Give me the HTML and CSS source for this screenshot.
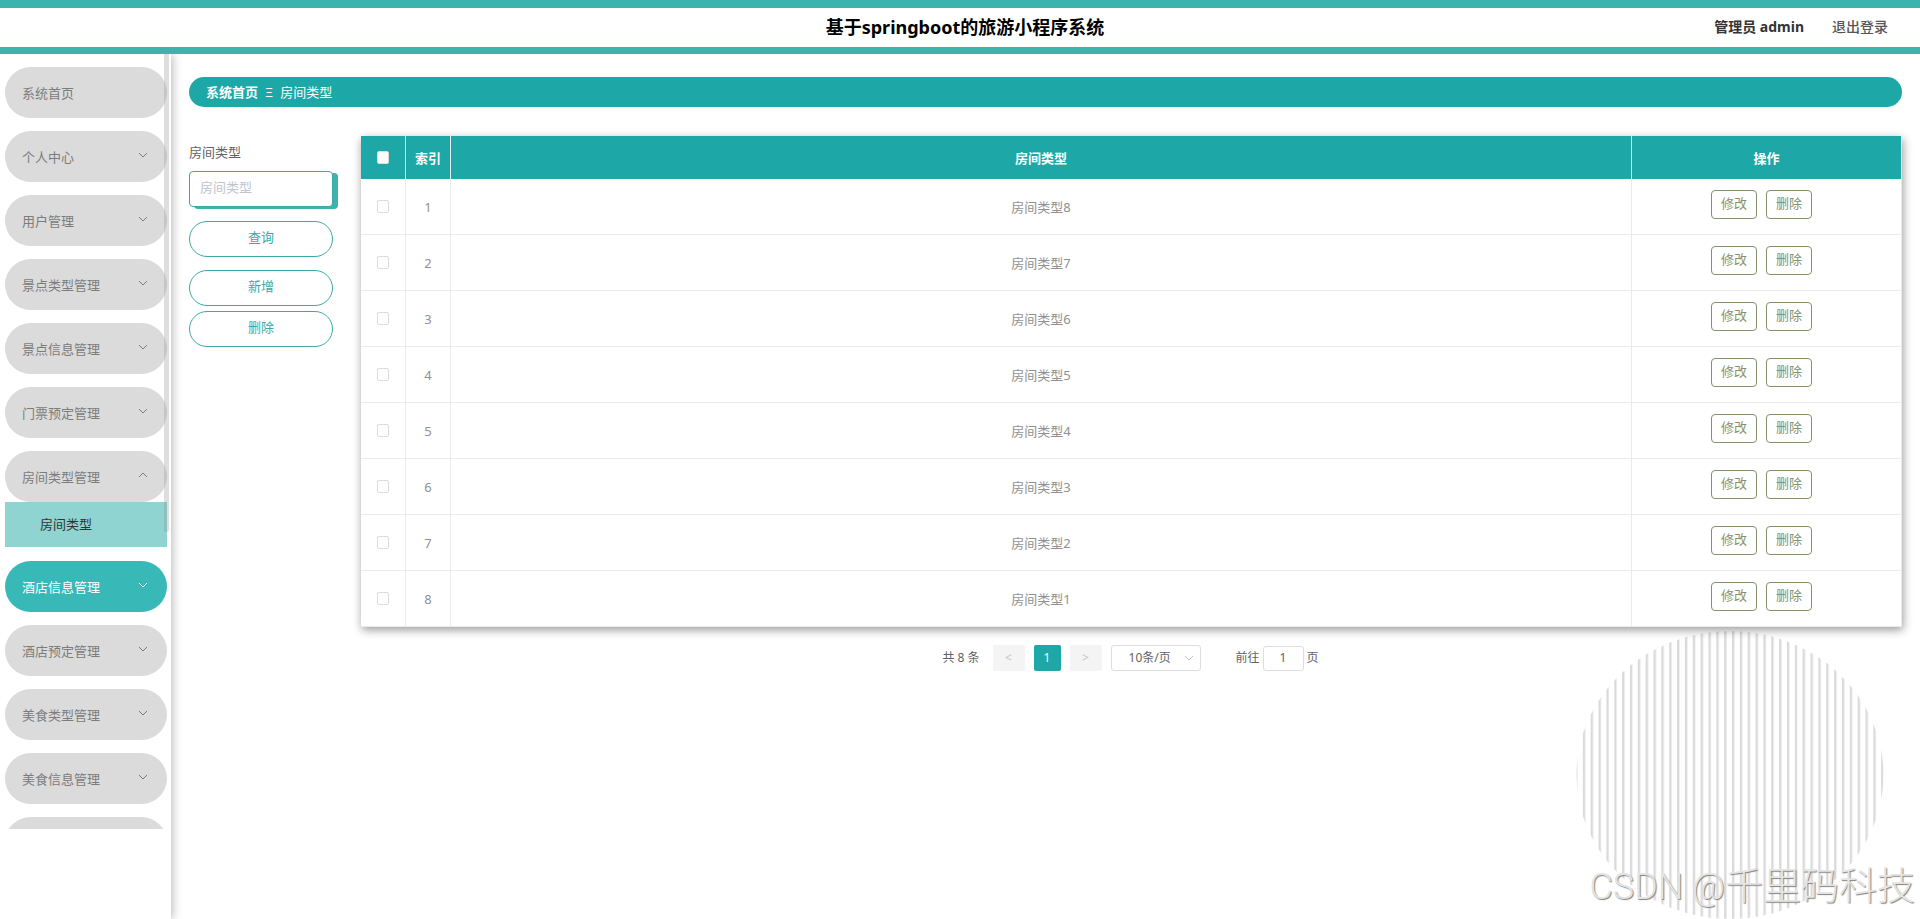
FILE: index.html
```html
<!DOCTYPE html>
<html lang="zh-CN">
<head>
<meta charset="utf-8">
<title>基于springboot的旅游小程序系统</title>
<link rel="stylesheet" href="styles.css">
</head>
<body>
<svg class="defs" aria-hidden="true">
  <symbol id="chevron" viewBox="0 0 10 6"><path d="M1 1l4 4 4-4" fill="none" stroke="currentColor"/></symbol>
</svg>
<header class="topbar">
  <span></span>
  <h1 class="topbar-title">基于springboot的旅游小程序系统</h1>
  <div class="topbar-user"><span class="user-name">管理员 admin</span><a class="logout" href="#">退出登录</a></div>
</header>
<div class="layout">
  <aside class="sidebar">
    <nav class="menu">
      <a class="menu-item" href="#">系统首页</a>
      <button class="menu-item">个人中心<svg class="arrow"><use href="#chevron"/></svg></button>
      <button class="menu-item">用户管理<svg class="arrow"><use href="#chevron"/></svg></button>
      <button class="menu-item">景点类型管理<svg class="arrow"><use href="#chevron"/></svg></button>
      <button class="menu-item">景点信息管理<svg class="arrow"><use href="#chevron"/></svg></button>
      <button class="menu-item">门票预定管理<svg class="arrow"><use href="#chevron"/></svg></button>
      <div class="submenu">
        <button class="menu-item" aria-expanded="true">房间类型管理<svg class="arrow arrow-up"><use href="#chevron"/></svg></button>
        <a class="submenu-item" href="#">房间类型</a>
      </div>
      <button class="menu-item menu-item-hover">酒店信息管理<svg class="arrow"><use href="#chevron"/></svg></button>
      <button class="menu-item">酒店预定管理<svg class="arrow"><use href="#chevron"/></svg></button>
      <button class="menu-item">美食类型管理<svg class="arrow"><use href="#chevron"/></svg></button>
      <button class="menu-item">美食信息管理<svg class="arrow"><use href="#chevron"/></svg></button>
      <button class="menu-item" aria-label="更多"></button>
    </nav>
    <div class="scroll-thumb"></div>
  </aside>
  <main class="main">
    <nav class="breadcrumb"><a class="crumb-home" href="#">系统首页</a><span>Ξ</span><span>房间类型</span></nav>
    <div class="content">
      <form class="search">
        <label class="search-label" for="room-type">房间类型</label>
        <input class="search-input" id="room-type" type="text" placeholder="房间类型">
        <button class="pill" type="button">查询</button>
        <div class="pill-group">
          <button class="pill" type="button">新增</button>
          <button class="pill" type="button">删除</button>
        </div>
      </form>
      <section class="listing">
        <table class="grid">
          <colgroup><col class="col-small"><col class="col-small"><col><col class="col-actions"></colgroup>
          <thead><tr><th><input class="check" type="checkbox" aria-label="全选"></th><th>索引</th><th>房间类型</th><th>操作</th></tr></thead>
          <tbody>
            <tr><td><input class="check" type="checkbox" aria-label="选择 1"></td><td>1</td><td>房间类型8</td><td><div class="actions"><button class="action">修改</button><button class="action">删除</button></div></td></tr>
            <tr><td><input class="check" type="checkbox" aria-label="选择 2"></td><td>2</td><td>房间类型7</td><td><div class="actions"><button class="action">修改</button><button class="action">删除</button></div></td></tr>
            <tr><td><input class="check" type="checkbox" aria-label="选择 3"></td><td>3</td><td>房间类型6</td><td><div class="actions"><button class="action">修改</button><button class="action">删除</button></div></td></tr>
            <tr><td><input class="check" type="checkbox" aria-label="选择 4"></td><td>4</td><td>房间类型5</td><td><div class="actions"><button class="action">修改</button><button class="action">删除</button></div></td></tr>
            <tr><td><input class="check" type="checkbox" aria-label="选择 5"></td><td>5</td><td>房间类型4</td><td><div class="actions"><button class="action">修改</button><button class="action">删除</button></div></td></tr>
            <tr><td><input class="check" type="checkbox" aria-label="选择 6"></td><td>6</td><td>房间类型3</td><td><div class="actions"><button class="action">修改</button><button class="action">删除</button></div></td></tr>
            <tr><td><input class="check" type="checkbox" aria-label="选择 7"></td><td>7</td><td>房间类型2</td><td><div class="actions"><button class="action">修改</button><button class="action">删除</button></div></td></tr>
            <tr><td><input class="check" type="checkbox" aria-label="选择 8"></td><td>8</td><td>房间类型1</td><td><div class="actions"><button class="action">修改</button><button class="action">删除</button></div></td></tr>
          </tbody>
        </table>
        <div class="pager">
          <span class="pager-total">共 8 条</span>
          <button class="pager-step" disabled>&lt;</button>
          <button class="pager-page">1</button>
          <button class="pager-step" disabled>&gt;</button>
          <div class="pager-size"><select class="pager-select" aria-label="每页条数"><option>10条/页</option></select><svg class="pager-arrow"><use href="#chevron"/></svg></div>
          <label class="pager-jump">前往<input class="pager-input" type="text" value="1">页</label>
        </div>
      </section>
    </div>
  </main>
</div>
<svg class="stripes" viewBox="0 0 308 288" aria-hidden="true">
  <defs><pattern id="bars" x="-1" width="7.85" height="288" patternUnits="userSpaceOnUse"><rect width="2.4" height="288" fill="#dadada"/></pattern></defs>
  <ellipse cx="154" cy="144" rx="153.5" ry="144" fill="url(#bars)"/>
</svg>
<div class="watermark"><span class="watermark-latin">CSDN @</span>千里码科技</div>
</body>
</html>
```
FILE: styles.css
```css
* { box-sizing: border-box; }
body {
  margin: 0;
  min-height: 100vh;
  display: flex;
  flex-direction: column;
  background: #fff;
  color: #606266;
  font: 13px/20px "Noto Sans", "Noto Sans CJK SC", sans-serif;
}
button, input, select { font: inherit; color: inherit; margin: 0; }
button { cursor: pointer; }
a { color: inherit; text-decoration: none; }
.defs { display: none; }

.topbar {
  height: 54px;
  display: grid;
  grid-template-columns: 1fr auto 1fr;
  align-items: center;
  padding: 0 32px 2px 42px;
  background: #fff;
  border-top: 8px solid #3cb4ad;
  border-bottom: 7px solid #3cb4ad;
}
.topbar-title { margin: 0; font-size: 18px; line-height: 24px; font-weight: 700; color: #000; }
.topbar-user { display: flex; justify-content: flex-end; gap: 28px; font-size: 14px; }
.user-name { font-weight: 700; color: #333; }
.logout { color: #555; font-weight: 500; }

.layout { flex: 1; display: flex; }
.sidebar {
  position: relative;
  flex: none;
  width: 171px;
  background: #fff;
  box-shadow: 1px 0 10px rgba(0, 0, 0, 0.3);
  clip-path: inset(0 -20px 0 0);
}
.menu {
  height: calc(100vh - 144px);
  overflow: hidden;
  display: flex;
  flex-direction: column;
  gap: 13px;
  padding: 13px 4px 0 5px;
}
.menu-item {
  flex: none;
  width: 100%;
  height: 51px;
  display: flex;
  align-items: center;
  justify-content: space-between;
  padding: 0 19px 0 17px;
  border: 0;
  border-radius: 26px;
  background: #dbdbdb;
  color: #7c7c7c;
  text-align: left;
}
.menu-item-hover { background: #38b8b6; color: #fff; }
.arrow { width: 10px; height: 6px; margin-bottom: 3px; }
.arrow-up { transform: rotate(180deg); }
.submenu { flex: none; padding-bottom: 1px; }
.submenu-item {
  display: flex;
  align-items: center;
  height: 45px;
  padding: 0 0 2px 35px;
  background: #8fd4d0;
  color: #333;
}
.scroll-thumb {
  position: absolute;
  top: 0;
  left: 164px;
  width: 5px;
  height: 478px;
  border-radius: 0 0 3px 3px;
  background: rgba(144, 147, 153, 0.3);
}

.main { flex: 1; min-width: 0; padding: 23px 18px 0; }
.breadcrumb {
  height: 30px;
  display: flex;
  align-items: center;
  gap: 7px;
  padding: 0 17px 1px;
  border-radius: 15px;
  background: #1da7a7;
  color: #fff;
}
.crumb-home { font-weight: 700; }
.content { display: flex; align-items: flex-start; gap: 28px; padding-top: 29px; }

.search { flex: none; width: 144px; display: flex; flex-direction: column; padding-top: 6px; }
.search-label { margin-bottom: 9px; }
.search-input {
  width: 100%;
  height: 36px;
  margin-bottom: 14px;
  padding: 0 10px 4px;
  border: 1px solid #3ca8a8;
  border-radius: 4px;
  background: #fff;
  box-shadow: 5px 2px 0 #3cb4ad;
  outline: 0;
}
.search-input::placeholder { color: #c0c4cc; opacity: 1; }
.pill {
  width: 100%;
  height: 36px;
  padding: 0 0 5px;
  border: 1px solid #3ca8a8;
  border-radius: 18px;
  background: #fff;
  color: #3ca8a8;
}
.pill-group { display: flex; flex-direction: column; gap: 5px; margin-top: 13px; }

.listing { flex: 1; min-width: 0; }
.grid {
  width: 100%;
  table-layout: fixed;
  border-collapse: separate;
  border-spacing: 0;
  background: #fff;
  box-shadow: 1px 3px 9px rgba(0, 0, 0, 0.4);
  text-align: center;
  color: #909399;
}
.col-small { width: 45px; }
.col-actions { width: 270px; }
.grid th { height: 43px; padding: 0; background: #1da7a7; color: #fff; font-weight: 700; border-right: 1px solid #ebeef0; }
.grid td { height: 56px; padding: 0; color: #909090; border-right: 1px solid #ebebeb; border-bottom: 1px solid #ebebeb; }
.check {
  appearance: none;
  display: block;
  width: 12px;
  height: 13px;
  margin: 0 auto;
  border: 1px solid #dcdcdc;
  border-radius: 2px;
  background: #fff;
}
.actions { display: flex; justify-content: center; gap: 9px; padding: 0 10px 4px 0; }
.action {
  height: 29px;
  padding: 0 9px 3px;
  border: 1px solid #84926c;
  border-radius: 4px;
  background: #fff;
  color: #84926c;
}

.pager { display: flex; justify-content: center; align-items: center; gap: 9px; padding: 18px 2px 0 0; font-size: 12px; }
.pager-total { margin-right: 4px; }
.pager-step, .pager-page { height: 26px; padding: 0; border: 0; border-radius: 2px; }
.pager-step { width: 32px; background: #f4f4f5; color: #c0c4cc; }
.pager-page { width: 27px; background: #1da7a7; color: #fff; }
.pager-size { position: relative; }
.pager-select {
  appearance: none;
  display: block;
  width: 90px;
  height: 26px;
  padding: 0 17px;
  border: 1px solid #dcdfe0;
  border-radius: 3px;
  background: #fff;
}
.pager-arrow { position: absolute; top: 10px; right: 7px; width: 10px; height: 6px; color: #c0c4cc; }
.pager-jump { display: flex; align-items: center; gap: 3px; margin-left: 26px; }
.pager-input { width: 41px; height: 25px; padding: 0 0 2px; border: 1px solid #dcdfe0; border-radius: 3px; background: #fff; text-align: center; }

.stripes { position: absolute; right: 36px; bottom: 0; width: 308px; height: 288px; z-index: -1; }
.watermark {
  position: absolute;
  right: 5px;
  bottom: 9px;
  font: 300 38px/46px "Noto Sans CJK SC", sans-serif;
  color: #e4e4e4;
  text-shadow: 1px 1px 1px #808080;
  white-space: nowrap;
}
.watermark-latin { font-family: Roboto, sans-serif; font-size: 36px; }
```
